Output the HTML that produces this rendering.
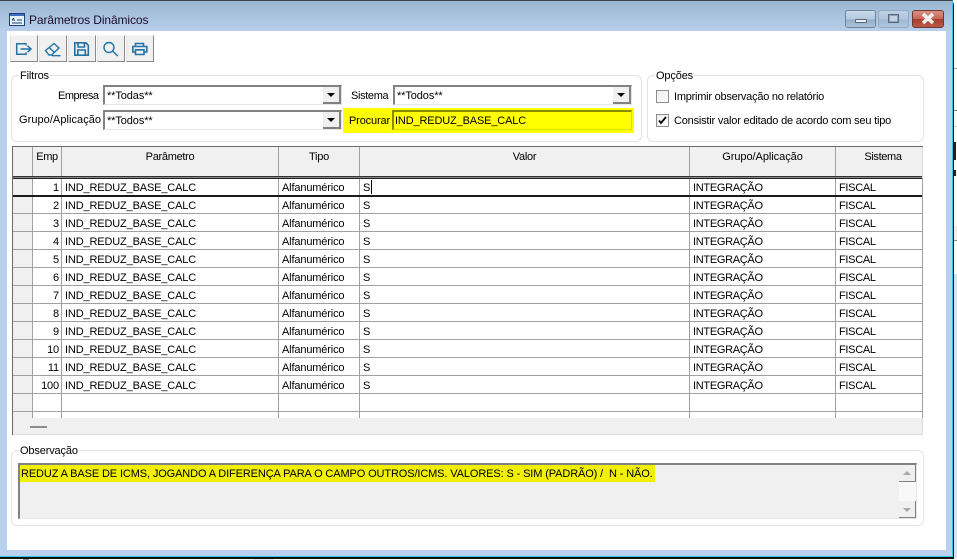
<!DOCTYPE html>
<html lang="pt">
<head>
<meta charset="utf-8">
<title>Parâmetros Dinâmicos</title>
<style>
html,body{margin:0;padding:0;background:#fff;}
body{position:relative;width:957px;height:560px;overflow:hidden;font-family:"Liberation Sans",sans-serif;font-size:11px;color:#000;}
.a{position:absolute;box-sizing:border-box;}
.t{position:absolute;white-space:nowrap;line-height:14px;letter-spacing:-.2px;}
.tb{position:absolute;top:35px;width:28px;height:27px;background:#f0f0f0;border-right:1px solid #8a8a8a;border-bottom:1px solid #8a8a8a;border-left:1px solid #e4e4e4;border-top:1px solid #f8f8f8;box-sizing:border-box;}
.tb svg{position:absolute;left:3px;top:3px;}
.grp{position:absolute;border:1px solid #e3e3e3;border-radius:6px;box-sizing:border-box;}
.lbl{position:absolute;background:#fff;padding:0 1px;white-space:nowrap;line-height:14px;letter-spacing:-.15px;}
.inp{position:absolute;height:20px;background:#fff;box-sizing:border-box;border-top:2px solid #828282;border-left:2px solid #828282;border-right:1px solid #e6e6e6;border-bottom:1px solid #e6e6e6;line-height:18px;padding-left:2px;letter-spacing:-.1px;white-space:nowrap;}
.arr{position:absolute;right:0;top:0;width:18px;height:17px;background:#f0f0f0;border-right:2px solid #808080;border-bottom:2px solid #808080;box-sizing:border-box;}
.arr:after{content:"";position:absolute;left:4px;top:6px;border-left:4px solid transparent;border-right:4px solid transparent;border-top:4px solid #000;}
.chk{position:absolute;left:656px;width:13px;height:13px;box-sizing:border-box;border:1px solid #8e8e8e;background:linear-gradient(135deg,#ececec,#fff);}
table{position:absolute;left:13px;top:178px;border-collapse:separate;border-spacing:0;table-layout:fixed;width:910px;}
td{height:18px;padding:3px 0 0 3px;box-sizing:border-box;border-right:1px solid #a0a0a0;border-bottom:1px solid #a0a0a0;white-space:nowrap;overflow:hidden;line-height:14px;background:#fff;letter-spacing:-.15px;}
td:first-child{background:#f0f0f0;}
td.n{text-align:right;padding:3px 2px 0 0;}
td.g,td.f{letter-spacing:-.3px;}
.h{position:absolute;top:150px;text-align:center;line-height:14px;letter-spacing:-.25px;}
.v{position:absolute;top:147px;width:1px;height:30px;background:#a0a0a0;}
</style>
</head>
<body>
<!-- background behind the window -->
<div class="a" style="left:954px;top:0;width:3px;height:560px;background:#fff"></div>
<div class="a" style="left:954px;top:68px;width:3px;height:1px;background:#999"></div>
<div class="a" style="left:954px;top:110px;width:3px;height:1px;background:#777"></div>
<div class="a" style="left:954px;top:126px;width:3px;height:1px;background:#ccc"></div>
<div class="a" style="left:954px;top:142px;width:2px;height:18px;background:#222"></div>
<div class="a" style="left:954px;top:170px;width:2px;height:6px;background:#222"></div>
<div class="a" style="left:954px;top:226px;width:3px;height:14px;background:#eee"></div>
<div class="a" style="left:954px;top:240px;width:3px;height:1px;background:#888"></div>
<div class="a" style="left:954px;top:274px;width:3px;height:286px;background:#d4e2f2"></div>
<div class="a" style="left:0;top:558px;width:957px;height:2px;background:#fff"></div>
<div class="a" style="left:23px;top:558px;width:6px;height:2px;background:#8a8a8a"></div>
<div class="a" style="left:253px;top:558px;width:20px;height:2px;background:#e8e8e8"></div>

<!-- window frame -->
<div class="a" style="left:0;top:0;width:954px;height:559px;background:#b9d1ec;border-right:1px solid #111;border-bottom:2px solid #111;border-radius:0 5px 0 0"></div>
<div class="a" style="left:952px;top:2px;width:1px;height:555px;background:#38c4e8"></div>
<div class="a" style="left:0;top:556px;width:953px;height:1px;background:#38c4e8"></div>
<div class="a" style="left:0;top:0;width:953px;height:1px;background:#3c4248;border-radius:0 5px 0 0"></div>
<div class="a" style="left:0;top:1px;width:952px;height:30px;background:linear-gradient(#9bb5d1,#b7cfea)"></div>

<!-- title bar -->
<svg class="a" style="left:9px;top:13px" width="16" height="14" viewBox="0 0 16 14">
<rect x=".5" y=".5" width="15" height="12" fill="#e9f1fa" stroke="#1d3f7a"/>
<rect x="1" y="1" width="14" height="2" fill="#3a6fc0"/>
<path d="M3 7h3M3 7l2-2M3 10h10M8 7h5" stroke="#1d3f7a" fill="none"/>
</svg>
<div class="t" style="left:29px;top:13px;font-size:12px;color:#1c0c2c;letter-spacing:-.1px">Parâmetros Dinâmicos</div>

<div class="a" style="left:845px;top:10px;width:31px;height:18px;border:1px solid #6f8499;border-radius:3px;background:linear-gradient(#cbdbeb 0,#b2c8df 50%,#95aec9 55%,#abc4dd 100%)"></div>
<div class="a" style="left:855px;top:19px;width:12px;height:4px;background:#eef2f6;border:1px solid #55657a;border-radius:1px"></div>
<div class="a" style="left:878px;top:10px;width:31px;height:18px;border:1px solid #92a9c1;border-radius:3px;background:linear-gradient(#c0d2e5 0,#aec5dd 50%,#9fb8d2 55%,#afc8e1 100%)"></div>
<div class="a" style="left:888px;top:14px;width:11px;height:9px;border:1px solid #5a6878;outline:1px solid #8fa3b8;outline-offset:-2px;background:#c4d3e2"></div>
<div class="a" style="left:912px;top:10px;width:32px;height:18px;border:1px solid #6a3a36;border-radius:3px;background:linear-gradient(#d98f82 0,#c96a5a 48%,#a83a2a 52%,#bf5a48 100%)"></div>
<svg class="a" style="left:920px;top:12px" width="16" height="13" viewBox="0 0 16 13"><path d="M3 2l10 9M13 2L3 11" stroke="#eeeeee" stroke-width="3.6" fill="none"/></svg>

<!-- client -->
<div class="a" style="left:7px;top:31px;width:939px;height:519px;background:#fff"></div>

<!-- toolbar -->
<div class="tb" style="left:10px"><svg width="20" height="20" viewBox="0 0 20 20" fill="none" stroke="#2272a4" stroke-width="1.5"><path d="M12 6.500V4.700H2.700V15.300H12V13.500"/><path d="M6.500 10H17M13.500 6.800L17 10l-3.500 3.200"/></svg></div>
<div class="tb" style="left:39px"><svg width="20" height="20" viewBox="0 0 20 20" fill="none" stroke="#2272a4" stroke-width="1.4"><path d="M2.500 11.500L11 4.500l5 4.500-7.500 7H6z"/><path d="M6 8.500l5 4.500M9 16.700h8.500"/></svg></div>
<div class="tb" style="left:68px"><svg width="20" height="20" viewBox="0 0 20 20" fill="none" stroke="#2272a4" stroke-width="1.6"><path d="M2.800 3.800h11l2.500 2.500v9.900H2.800z"/><path d="M6 3.800V8h6.500V3.800M5.800 16v-5h7.500v5"/></svg></div>
<div class="tb" style="left:97px"><svg width="20" height="20" viewBox="0 0 20 20" fill="none" stroke="#2272a4" stroke-width="1.4"><circle cx="8" cy="8.500" r="5"/><path d="M11.800 12.300l5 4.700"/></svg></div>
<div class="tb" style="left:126px"><svg width="20" height="20" viewBox="0 0 20 20" fill="none" stroke="#2272a4" stroke-width="1.6"><path d="M5.500 7.500V4.500h8v3M5.500 13H2.800V7.500h14V13H14"/><path d="M5.500 10.800h8.500V15.500H5.500z"/></svg></div>

<!-- Filtros -->
<div class="grp" style="left:11px;top:75px;width:631px;height:67px"></div>
<div class="lbl" style="left:19px;top:69px">Filtros</div>
<div class="t" style="left:58px;top:89px;letter-spacing:-.5px">Empresa</div>
<div class="inp" style="left:103px;top:85px;width:239px">**Todas**<span class="arr"></span></div>
<div class="t" style="left:19px;top:113px;letter-spacing:.05px">Grupo/Aplicação</div>
<div class="inp" style="left:103px;top:110px;width:239px">**Todos**<span class="arr"></span></div>
<div class="t" style="left:351px;top:89px;letter-spacing:-.35px">Sistema</div>
<div class="inp" style="left:393px;top:85px;width:239px">**Todos**<span class="arr"></span></div>
<div class="a" style="left:343px;top:108px;width:291px;height:25px;background:#ffff00"></div>
<div class="t" style="left:349px;top:114px;letter-spacing:-.15px">Procurar</div>
<div class="inp" style="left:392px;top:110px;width:240px;background:#ffff00;border-top-color:#8a8a00;border-left-color:#8a8a00;border-right-color:#e0e000;border-bottom-color:#e0e000;padding-left:1px;letter-spacing:-.15px">IND_REDUZ_BASE_CALC</div>

<!-- Opcoes -->
<div class="grp" style="left:647px;top:75px;width:277px;height:67px"></div>
<div class="lbl" style="left:655px;top:69px">Opções</div>
<div class="chk" style="top:90px"></div>
<div class="t" style="left:674px;top:90px;letter-spacing:-.24px">Imprimir observação no relatório</div>
<div class="chk" style="top:114px"></div>
<svg class="a" style="left:656px;top:114px" width="13" height="13" viewBox="0 0 13 13"><path d="M3 6.500l2 2.500 5-6" stroke="#000" stroke-width="1.800" fill="none"/></svg>
<div class="t" style="left:674px;top:114px">Consistir valor editado de acordo com seu tipo</div>

<!-- grid -->
<div class="a" style="left:12px;top:146px;width:911px;height:289px;background:#f0f0f0;border-right:1px solid #dcdcdc;border-bottom:1px solid #dcdcdc"></div>
<div class="a" style="left:12px;top:146px;width:1px;height:289px;background:#6a6a6a"></div>
<div class="a" style="left:12px;top:146px;width:911px;height:1px;background:#6a6a6a"></div>
<div class="v" style="left:32px"></div><div class="v" style="left:61px"></div><div class="v" style="left:278px"></div><div class="v" style="left:359px"></div><div class="v" style="left:689px"></div><div class="v" style="left:835px"></div>
<div class="h" style="left:33px;width:28px;letter-spacing:-.4px">Emp</div>
<div class="h" style="left:62px;width:216px;letter-spacing:-.3px">Parâmetro</div>
<div class="h" style="left:279px;width:80px">Tipo</div>
<div class="h" style="left:360px;width:329px">Valor</div>
<div class="h" style="left:690px;width:145px;letter-spacing:-.05px">Grupo/Aplicação</div>
<div class="h" style="left:840px;width:86px;letter-spacing:-.35px">Sistema</div>

<table>
<colgroup><col style="width:20px"><col style="width:29px"><col style="width:217px"><col style="width:81px"><col style="width:330px"><col style="width:146px"><col style="width:87px"></colgroup>
<tr><td></td><td class="n">1</td><td>IND_REDUZ_BASE_CALC</td><td>Alfanumérico</td><td>S</td><td class="g">INTEGRAÇÃO</td><td class="f">FISCAL</td></tr>
<tr><td></td><td class="n">2</td><td>IND_REDUZ_BASE_CALC</td><td>Alfanumérico</td><td>S</td><td class="g">INTEGRAÇÃO</td><td class="f">FISCAL</td></tr>
<tr><td></td><td class="n">3</td><td>IND_REDUZ_BASE_CALC</td><td>Alfanumérico</td><td>S</td><td class="g">INTEGRAÇÃO</td><td class="f">FISCAL</td></tr>
<tr><td></td><td class="n">4</td><td>IND_REDUZ_BASE_CALC</td><td>Alfanumérico</td><td>S</td><td class="g">INTEGRAÇÃO</td><td class="f">FISCAL</td></tr>
<tr><td></td><td class="n">5</td><td>IND_REDUZ_BASE_CALC</td><td>Alfanumérico</td><td>S</td><td class="g">INTEGRAÇÃO</td><td class="f">FISCAL</td></tr>
<tr><td></td><td class="n">6</td><td>IND_REDUZ_BASE_CALC</td><td>Alfanumérico</td><td>S</td><td class="g">INTEGRAÇÃO</td><td class="f">FISCAL</td></tr>
<tr><td></td><td class="n">7</td><td>IND_REDUZ_BASE_CALC</td><td>Alfanumérico</td><td>S</td><td class="g">INTEGRAÇÃO</td><td class="f">FISCAL</td></tr>
<tr><td></td><td class="n">8</td><td>IND_REDUZ_BASE_CALC</td><td>Alfanumérico</td><td>S</td><td class="g">INTEGRAÇÃO</td><td class="f">FISCAL</td></tr>
<tr><td></td><td class="n">9</td><td>IND_REDUZ_BASE_CALC</td><td>Alfanumérico</td><td>S</td><td class="g">INTEGRAÇÃO</td><td class="f">FISCAL</td></tr>
<tr><td></td><td class="n">10</td><td>IND_REDUZ_BASE_CALC</td><td>Alfanumérico</td><td>S</td><td class="g">INTEGRAÇÃO</td><td class="f">FISCAL</td></tr>
<tr><td></td><td class="n">11</td><td>IND_REDUZ_BASE_CALC</td><td>Alfanumérico</td><td>S</td><td class="g">INTEGRAÇÃO</td><td class="f">FISCAL</td></tr>
<tr><td></td><td class="n">100</td><td>IND_REDUZ_BASE_CALC</td><td>Alfanumérico</td><td>S</td><td class="g">INTEGRAÇÃO</td><td class="f">FISCAL</td></tr>
<tr><td></td><td></td><td></td><td></td><td></td><td></td><td></td></tr>
</table>
<!-- bottom partial row -->
<div class="a" style="left:13px;top:412px;width:19px;height:6px;background:#f0f0f0"></div>
<div class="a" style="left:33px;top:412px;width:889px;height:6px;background:#fff"></div>
<div class="a" style="left:32px;top:412px;width:1px;height:6px;background:#a0a0a0"></div>
<div class="a" style="left:61px;top:412px;width:1px;height:6px;background:#a0a0a0"></div>
<div class="a" style="left:278px;top:412px;width:1px;height:6px;background:#a0a0a0"></div>
<div class="a" style="left:359px;top:412px;width:1px;height:6px;background:#a0a0a0"></div>
<div class="a" style="left:689px;top:412px;width:1px;height:6px;background:#a0a0a0"></div>
<div class="a" style="left:835px;top:412px;width:1px;height:6px;background:#a0a0a0"></div>
<div class="a" style="left:922px;top:412px;width:1px;height:6px;background:#a0a0a0"></div>
<!-- selected row thick lines -->
<div class="a" style="left:13px;top:176px;width:909px;height:1px;background:#333"></div>
<div class="a" style="left:13px;top:177px;width:909px;height:1px;background:#888"></div>
<div class="a" style="left:13px;top:178px;width:909px;height:1px;background:#222"></div>
<div class="a" style="left:13px;top:195px;width:909px;height:2px;background:#1a1a1a"></div>
<div class="a" style="left:371px;top:180px;width:1px;height:14px;background:#000"></div>
<!-- horizontal scroll mark -->
<div class="a" style="left:30px;top:426px;width:17px;height:2px;background:#8c8c8c"></div>

<!-- Observacao -->
<div class="grp" style="left:11px;top:450px;width:913px;height:76px"></div>
<div class="lbl" style="left:19px;top:444px">Observação</div>
<div class="a" style="left:18px;top:463px;width:899px;height:56px;background:#f0f0f0;border-top:2px solid #828282;border-left:2px solid #828282;border-right:1px solid #e6e6e6;border-bottom:1px solid #e6e6e6"></div>
<div class="a" style="left:20px;top:465px;width:635px;height:17px;background:#f0f000"></div>
<div class="t" style="left:21px;top:467px;letter-spacing:-.12px">REDUZ A BASE DE ICMS, JOGANDO A DIFERENÇA PARA O CAMPO OUTROS/ICMS. VALORES: S - SIM (PADRÃO) /&nbsp; N - NÃO.</div>
<div class="a" style="left:899px;top:465px;width:17px;height:53px;background:#f8f8f8"></div>
<div class="a" style="left:899px;top:465px;width:17px;height:17px;background:#f0f0f0;border-right:1px solid #808080;border-bottom:1px solid #808080"></div>
<div class="a" style="left:903px;top:471px;width:0;height:0;border-left:4px solid transparent;border-right:4px solid transparent;border-bottom:4px solid #a8a8a8"></div>
<div class="a" style="left:899px;top:501px;width:17px;height:17px;background:#f0f0f0;border-right:1px solid #808080;border-bottom:1px solid #808080"></div>
<div class="a" style="left:903px;top:508px;width:0;height:0;border-left:4px solid transparent;border-right:4px solid transparent;border-top:4px solid #a8a8a8"></div>
</body>
</html>
